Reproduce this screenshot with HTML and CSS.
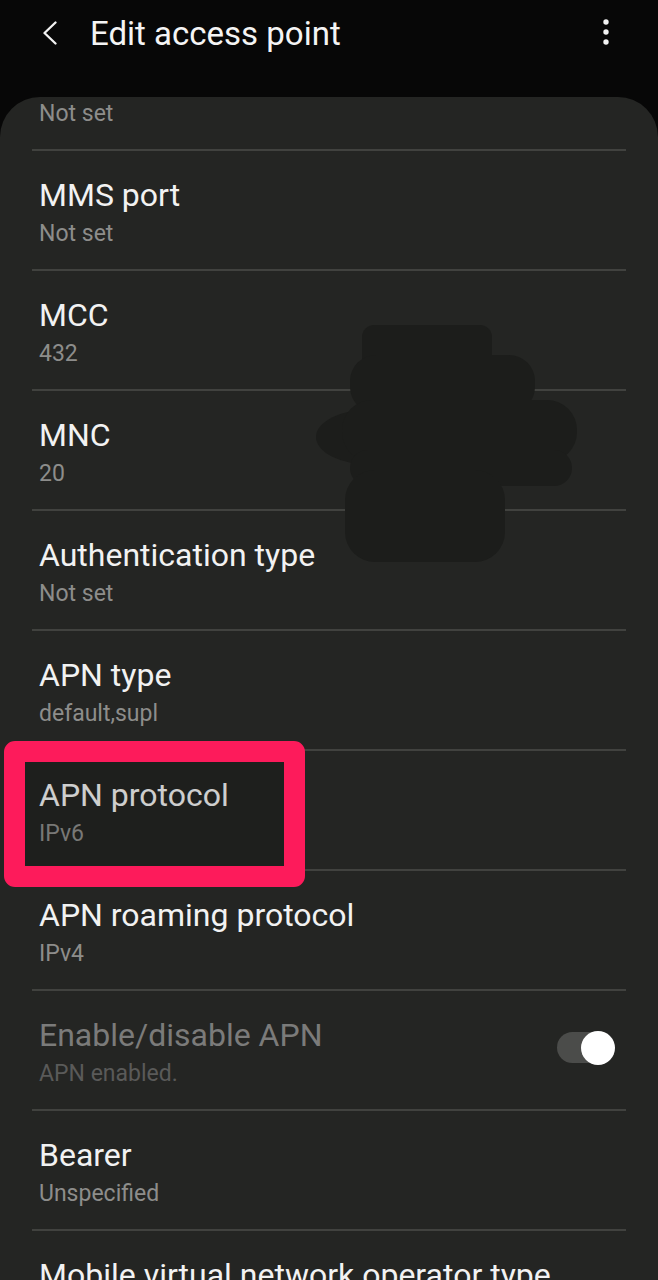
FILE: index.html
```html
<!DOCTYPE html>
<html>
<head>
<meta charset="utf-8">
<link rel="stylesheet" href="styles.css">
</head>
<body>
<div class="screen">
  <header class="appbar">
    <svg class="back" width="16" height="24" viewBox="0 0 16 24"><path d="M13.5 1.5 L2.5 12 L13.5 22.5" fill="none" stroke="#f2f2f2" stroke-width="2.3" stroke-linecap="round" stroke-linejoin="round"/></svg>
    <h1 class="title">Edit access point</h1>
    <svg class="kebab" width="10" height="30" viewBox="0 0 10 30"><circle cx="5" cy="5" r="2.7" fill="#f2f2f2"/><circle cx="5" cy="15" r="2.7" fill="#f2f2f2"/><circle cx="5" cy="25" r="2.7" fill="#f2f2f2"/></svg>
  </header>
  <main class="card">
    <ul class="list">
      <li class="row row-partial"><span class="sub">Not set</span></li>
      <li class="row"><span class="label">MMS port</span><span class="sub">Not set</span></li>
      <li class="row"><span class="label">MCC</span><span class="sub">432</span></li>
      <li class="row"><span class="label">MNC</span><span class="sub">20</span></li>
      <li class="row"><span class="label">Authentication type</span><span class="sub">Not set</span></li>
      <li class="row"><span class="label">APN type</span><span class="sub">default,supl</span></li>
      <li class="row"><span class="label">APN protocol</span><span class="sub">IPv6</span></li>
      <li class="row"><span class="label">APN roaming protocol</span><span class="sub">IPv4</span></li>
      <li class="row row-toggle disabled">
        <div class="texts"><span class="label">Enable/disable APN</span><span class="sub">APN enabled.</span></div>
        <span class="switch"><span class="knob"></span></span>
      </li>
      <li class="row"><span class="label">Bearer</span><span class="sub">Unspecified</span></li>
      <li class="row"><span class="label">Mobile virtual network operator type</span><span class="sub">Not set</span></li>
    </ul>
    <div class="highlight"></div>
    <svg class="redact" width="300" height="280" viewBox="0 0 300 280">
      <g fill="#1c1d1b">
        <rect x="62" y="25" width="130" height="60" rx="12"/>
        <rect x="50" y="55" width="185" height="58" rx="26"/>
        <ellipse cx="72" cy="137" rx="56" ry="28"/>
        <rect x="42" y="100" width="235" height="62" rx="30"/>
        <rect x="50" y="150" width="222" height="36" rx="18"/>
        <rect x="45" y="170" width="160" height="92" rx="30"/>
      </g>
    </svg>
  </main>
</div>
</body>
</html>
```
FILE: styles.css
```css
* { box-sizing: border-box; margin: 0; padding: 0; }
html, body { background: #070707; }
body {
  width: 658px;
  height: 1280px;
  overflow: hidden;
  font-family: Roboto, "Noto Sans", "Liberation Sans", sans-serif;
}
.screen { display: flex; flex-direction: column; height: 1280px; }
.appbar {
  height: 97px;
  flex: none;
  display: flex;
  align-items: flex-start;
  padding-top: 15px;
  background: #070707;
}
.back { margin-left: 42px; margin-top: 6px; flex: none; }
.title {
  margin-left: 32px;
  font-weight: 400;
  font-size: 33px;
  line-height: 38px;
  color: #f4f4f4;
  flex: 1;
}
.kebab { margin-right: 47px; margin-top: 2px; flex: none; }
.card {
  position: relative;
  flex: 1;
  background: #242523;
  border-radius: 40px 40px 0 0;
  overflow: hidden;
}
.list { list-style: none; margin: 0 32px; }
.row {
  height: 120px;
  border-bottom: 2px solid #41423f;
  padding: 25px 0 0 7px;
  display: flex;
  flex-direction: column;
}
.row-partial { height: 54px; padding-top: 3px; }
.row-partial .sub { margin-top: 0; }
.label {
  font-size: 32px;
  line-height: 38px;
  color: #f2f2f2;
  white-space: nowrap;
}
.sub {
  margin-top: 6px;
  font-size: 23px;
  line-height: 28px;
  color: #8d8d8b;
}
.row-toggle { flex-direction: row; align-items: flex-start; }
.texts { display: flex; flex-direction: column; flex: 1; }
.disabled .label { color: #7b7b7a; }
.disabled .sub { color: #5a5a59; }
.switch {
  position: relative;
  flex: none;
  width: 54px;
  height: 31px;
  border-radius: 16px;
  background: #4b4c4a;
  margin-top: 16px;
  margin-right: 15px;
}
.knob {
  position: absolute;
  right: -4px;
  top: -1.5px;
  width: 34px;
  height: 34px;
  border-radius: 50%;
  background: #ffffff;
}
.highlight {
  position: absolute;
  left: 4px;
  top: 644px;
  width: 301px;
  height: 146px;
  border: 21px solid #fd1b5b;
  border-radius: 11px;
  background: rgba(0,0,0,0.15);
}
.redact { position: absolute; left: 300px; top: 203px; }
```
